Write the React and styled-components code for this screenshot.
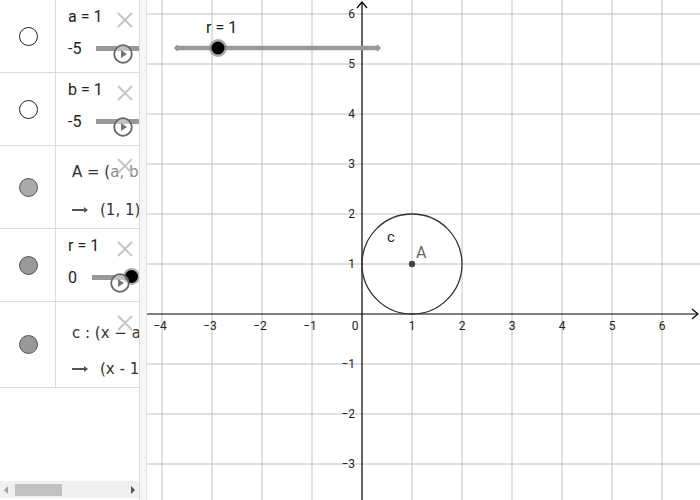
import React from 'react';
import styled, { createGlobalStyle } from 'styled-components';

const GlobalStyle = createGlobalStyle`
    html, body {
        margin: 0;
        padding: 0;
        background: #fff;
    }
    body {
        font-family: Roboto, "Liberation Sans", sans-serif;
    }
`;

const AppFrame = styled.div`
    width: 700px;
    height: 500px;
    display: flex;
    overflow: hidden;
    background: #fff;
`;

const AlgebraView = styled.div`
    width: 139px;
    flex: none;
    border-right: 1px solid #dcdcdc;
    display: flex;
    flex-direction: column;
    overflow: hidden;
`;

const RowList = styled.div`
    flex: 1;
    display: flex;
    flex-direction: column;
`;

const Row = styled.div`
    box-sizing: border-box;
    height: ${p => p.$h}px;
    display: grid;
    grid-template-columns: 56px 1fr;
    border-bottom: 1px solid #dcdcdc;
    width: 139px;
`;

const MarbleCell = styled.div`
    border-right: 1px solid #dcdcdc;
    display: flex;
    align-items: center;
    justify-content: center;
    padding-top: ${p => p.$shift || 0}px;
`;

const Marble = styled.div`
    width: 19px;
    height: 19px;
    border-radius: 50%;
    box-sizing: border-box;
    border: 1px solid ${p => (p.$fill ? '#555' : '#222')};
    background: ${p => p.$fill || '#fff'};
    margin-left: 1px;
`;

const Content = styled.div`
    position: relative;
    overflow: hidden;
    padding: ${p => p.$top}px 0 0 ${p => p.$left || 12}px;
    display: flex;
    flex-direction: column;
`;

const Caption = styled.div`
    font-size: 16px;
    line-height: 20px;
    color: #222;
    white-space: nowrap;
`;

const MathLine = styled.div`
    font-family: "DejaVu Sans", sans-serif;
    font-size: 15px;
    line-height: 20px;
    color: #333;
    white-space: nowrap;
    margin-top: ${p => p.$gap || 0}px;
    display: flex;
    align-items: center;
`;

const Faded = styled.span`
    color: #8a8a8a;
`;

const Arrow = styled.span`
    display: inline-block;
    flex: none;
    width: 15px;
    height: 2px;
    background: #555;
    margin-right: 13px;
    position: relative;
    &::after {
        content: '';
        position: absolute;
        right: -1px;
        top: -2px;
        border-left: 4px solid #555;
        border-top: 3px solid transparent;
        border-bottom: 3px solid transparent;
    }
`;

const SliderLine = styled.div`
    display: flex;
    align-items: center;
    margin-top: ${p => p.$gap}px;
    height: 20px;
`;

const SliderMin = styled.span`
    font-size: 16px;
    color: #222;
    width: ${p => p.$w}px;
    flex: none;
`;

const Track = styled.div`
    flex: 1;
    height: 5px;
    background: #999;
    position: relative;
    margin-right: ${p => p.$end || 0}px;
`;

const Knob = styled.div`
    position: absolute;
    right: -8px;
    top: -5px;
    width: 13px;
    height: 13px;
    border-radius: 50%;
    background: #000;
    box-shadow: 0 0 0 2px rgba(120, 120, 120, 0.6);
`;

const DeleteBtn = styled.svg`
    position: absolute;
    left: 61px;
    top: ${p => p.$top}px;
    width: 16px;
    height: 16px;
`;

const PlayBtn = styled.svg`
    position: absolute;
    left: ${p => p.$left}px;
    top: ${p => p.$top}px;
    width: 22px;
    height: 22px;
`;

const Scrollbar = styled.div`
    height: 17px;
    margin-bottom: 2px;
    background: #f0f0f0;
    display: flex;
    align-items: center;
    padding: 0 4px;
    gap: 4px;
`;

const ScrollArrow = styled.div`
    width: 0;
    height: 0;
    border-top: 4px solid transparent;
    border-bottom: 4px solid transparent;
    ${p => (p.$dir === 'left'
        ? 'border-right: 4px solid #a3a3a3;'
        : 'border-left: 4px solid #505050;')}
`;

const ScrollTrack = styled.div`
    flex: 1;
    height: 12px;
    display: flex;
`;

const ScrollThumb = styled.div`
    width: 47px;
    height: 12px;
    background: #c1c1c1;
    margin-left: 3px;
`;

const Splitter = styled.div`
    width: 6px;
    flex: none;
    background: #f6f6f6;
    border-right: 1px solid #e2e2e2;
`;

const GraphicsView = styled.div`
    flex: 1;
    position: relative;
    overflow: hidden;
`;

const Canvas = styled.svg`
    display: block;
    width: 553px;
    height: 500px;
    font-family: Roboto, "Liberation Sans", sans-serif;
`;

const Cross = ({ top }) => (
    <DeleteBtn $top={top} viewBox="0 0 16 16">
        <path d="M1 1 L15 15 M15 1 L1 15" stroke="#c4c4c4" strokeWidth="1.8" />
    </DeleteBtn>
);

const Play = ({ left, top }) => (
    <PlayBtn $left={left} $top={top} viewBox="0 0 22 22">
        <circle cx="11" cy="11" r="8.8" fill="rgba(255,255,255,0.4)" stroke="#666" strokeWidth="1.8" />
        <path d="M9 7 L15 11 L9 15 Z" fill="#777" />
    </PlayBtn>
);

// graphics geometry: origin in canvas coords, 50px per unit
const OX = 215;
const OY = 314;
const U = 50;

const Graph = () => {
    const xs = [];
    for (let i = -4; i <= 6; i++) xs.push(i);
    const ys = [];
    for (let j = -3; j <= 6; j++) ys.push(j);
    const minus = n => (n < 0 ? '\u2212' + Math.abs(n) : String(n));
    return (
        <Canvas viewBox="0 0 553 500">
            {xs.filter(i => i !== 0).map(i => (
                <line key={'gx' + i} x1={OX + i * U} y1="0" x2={OX + i * U} y2="500" stroke="#c0c0c0" strokeWidth="1" />
            ))}
            {ys.filter(j => j !== 0).map(j => (
                <line key={'gy' + j} x1="0" y1={OY - j * U} x2="553" y2={OY - j * U} stroke="#c0c0c0" strokeWidth="1" />
            ))}
            <line x1="0" y1={OY} x2="551" y2={OY} stroke="#000" strokeWidth="1.2" />
            <path d={`M545 ${OY - 5} L551 ${OY} L545 ${OY + 5}`} fill="none" stroke="#000" strokeWidth="1.2" />
            <line x1={OX} y1="2" x2={OX} y2="500" stroke="#000" strokeWidth="1.2" />
            <path d={`M${OX - 5} 8 L${OX} 2 L${OX + 5} 8`} fill="none" stroke="#000" strokeWidth="1.2" />

            {xs.filter(i => i !== 0).map(i => (
                <text key={'lx' + i} x={OX + i * U + (i < 0 ? -2 : 0)} y={OY + 16} fontSize="12" textAnchor="middle" fill="#222">
                    {minus(i)}
                </text>
            ))}
            <text x={OX - 7} y={OY + 16} fontSize="12" textAnchor="middle" fill="#222">0</text>
            {ys.filter(j => j !== 0).map(j => (
                <text key={'ly' + j} x={OX - 7} y={OY - j * U + 4} fontSize="12" textAnchor="end" fill="#222">
                    {minus(j)}
                </text>
            ))}

            <circle cx={OX + U} cy={OY - U} r={U} fill="none" stroke="#333" strokeWidth="1.3" />
            <circle cx={OX + U} cy={OY - U} r="3.2" fill="#444" />
            <text x={OX + U + 4} y={OY - U - 6} fontSize="16" fill="#666">A</text>
            <text x={OX + U - 25} y={OY - U - 22} fontSize="15" fill="#222">c</text>

            <line x1="30" y1="48" x2="231" y2="48" stroke="#999" strokeWidth="4.5" strokeLinecap="round" />
            <path d="M31 45 L28 48 L31 51 M230 45 L233 48 L230 51" fill="none" stroke="#999" strokeWidth="1.5" />
            <circle cx="71" cy="48" r="9" fill="#888" opacity="0.7" />
            <circle cx="71" cy="48" r="6.5" fill="#000" />
            <text x="59" y="33" fontSize="16" fill="#222">r = 1</text>
        </Canvas>
    );
};

const App = () => (
    <>
        <GlobalStyle />
        <AppFrame>
            <AlgebraView>
                <RowList>
                    <Row $h={73}>
                        <MarbleCell $shift={-4}><Marble /></MarbleCell>
                        <Content $top={7}>
                            <Caption>a = 1</Caption>
                            <SliderLine $gap={11}>
                                <SliderMin $w={28}>-5</SliderMin>
                                <Track />
                            </SliderLine>
                            <Cross top={12} />
                            <Play left={56} top={43} />
                        </Content>
                    </Row>
                    <Row $h={73}>
                        <MarbleCell $shift={-4}><Marble /></MarbleCell>
                        <Content $top={7}>
                            <Caption>b = 1</Caption>
                            <SliderLine $gap={11}>
                                <SliderMin $w={28}>-5</SliderMin>
                                <Track />
                            </SliderLine>
                            <Cross top={12} />
                            <Play left={56} top={43} />
                        </Content>
                    </Row>
                    <Row $h={83}>
                        <MarbleCell $shift={-4}><Marble $fill="#aaa" /></MarbleCell>
                        <Content $top={16} $left={16}>
                            <MathLine>A = (<Faded>a, b</Faded>)</MathLine>
                            <MathLine $gap={18}><Arrow />(1, 1)</MathLine>
                            <Cross top={12} />
                        </Content>
                    </Row>
                    <Row $h={73}>
                        <MarbleCell $shift={-4}><Marble $fill="#999" /></MarbleCell>
                        <Content $top={7}>
                            <Caption>r = 1</Caption>
                            <SliderLine $gap={11}>
                                <SliderMin $w={24}>0</SliderMin>
                                <Track $end={9}>
                                    <Knob />
                                </Track>
                            </SliderLine>
                            <Play left={53} top={43} />
                            <Cross top={12} />
                        </Content>
                    </Row>
                    <Row $h={86}>
                        <MarbleCell $shift={-4}><Marble $fill="#999" /></MarbleCell>
                        <Content $top={21} $left={16}>
                            <MathLine>c : (x − a)</MathLine>
                            <MathLine $gap={16}><Arrow />(x - 1)</MathLine>
                            <Cross top={13} />
                        </Content>
                    </Row>
                </RowList>
                <Scrollbar>
                    <ScrollArrow $dir="left" />
                    <ScrollTrack><ScrollThumb /></ScrollTrack>
                    <ScrollArrow $dir="right" />
                </Scrollbar>
            </AlgebraView>
            <Splitter />
            <GraphicsView>
                <Graph />
            </GraphicsView>
        </AppFrame>
    </>
);

export default App;
